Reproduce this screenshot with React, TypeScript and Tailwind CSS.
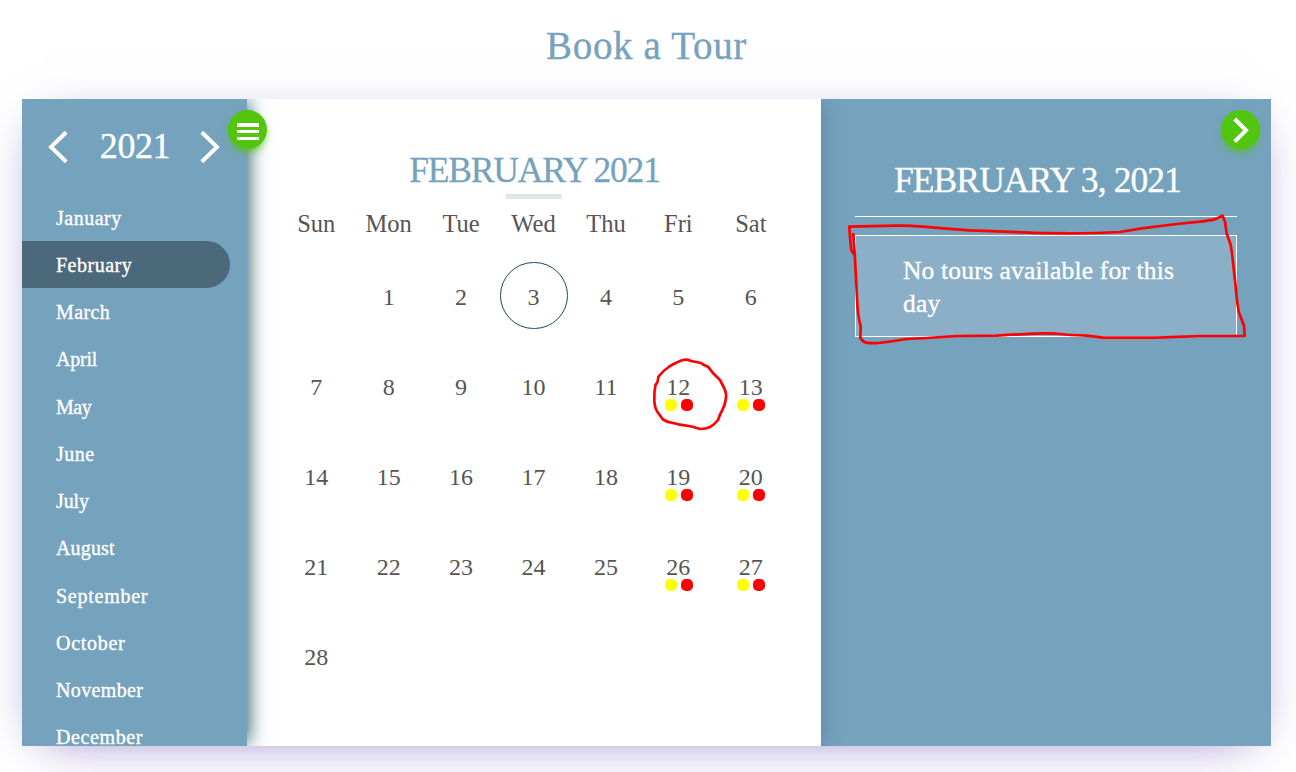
import React from "react";

const months = [
  { name: "January", ls: "tracking-[0.5px]" },
  { name: "February", ls: "tracking-[0.5px]" },
  { name: "March", ls: "tracking-[0.4px]" },
  { name: "April", ls: "tracking-[-0.2px]" },
  { name: "May", ls: "tracking-[-0.5px]" },
  { name: "June", ls: "tracking-[0.5px]" },
  { name: "July", ls: "tracking-[-0.1px]" },
  { name: "August", ls: "tracking-[0.15px]" },
  { name: "September", ls: "tracking-[0.75px]" },
  { name: "October", ls: "tracking-[0.7px]" },
  { name: "November", ls: "tracking-[0.35px]" },
  { name: "December", ls: "tracking-[0.6px]" },
];
const weekdays = ["Sun", "Mon", "Tue", "Wed", "Thu", "Fri", "Sat"];
const tourDays = [12, 13, 19, 20, 26, 27];
const selectedDay = 3;

function Chevron({ flip = false }: { flip?: boolean }) {
  return (
    <svg width="20" height="34" viewBox="0 0 20 34" className={flip ? "rotate-180" : ""} fill="none" stroke="white" strokeWidth="4">
      <path d="M18.2 2.2 3 17l15.2 14.8" />
    </svg>
  );
}

function Sidebar() {
  return (
    <aside className="relative z-20 h-[647px] w-[225px] shrink-0 bg-[#75a2bd] text-white shadow-[5px_0_18px_-3px_#2d6070]">
      <div className="h-full overflow-hidden">
        <div className="flex h-[95px] items-center justify-between pr-[27px] pb-[1px] pl-[26px]">
          <button className="mt-[2px]"><Chevron /></button>
          <span className="pl-[2px] text-[36px] leading-none tracking-[-0.4px] [-webkit-text-stroke:0.35px_white]">2021</span>
          <button className="mt-[2px]"><Chevron flip /></button>
        </div>
        <ul>
          {months.map((m) => (
            <li key={m.name} className="h-[47.25px]">
              <div
                className={
                  "flex h-[47px] w-[208px] items-center rounded-r-full pl-[34px] text-[20px] [-webkit-text-stroke:0.35px_white] " +
                  m.ls +
                  (m.name === "February" ? " bg-[#4c697b]" : "")
                }
              >
                {m.name}
              </div>
            </li>
          ))}
        </ul>
      </div>
      <button className="absolute top-[11px] -right-[20px] flex size-[39px] items-center justify-center rounded-full bg-[#52c50e] shadow-[0_5px_10px_-3px_#52c50e]">
        <svg width="22" height="18" viewBox="0 0 22 18" fill="white" className="mt-[4px]">
          <path d="M0 0h22v4H0zM0 7h22v3H0zM0 14h22v3H0z" />
        </svg>
      </button>
    </aside>
  );
}

function Day({ day }: { day: number }) {
  const hasTours = tourDays.includes(day);
  return (
    <div className="flex h-[90px] items-center justify-center">
      <div
        className={
          "ml-px flex h-[67px] w-[68px] flex-col items-center rounded-full pt-[22px] " +
          (day === selectedDay ? "border border-[#1c4a60]" : "border border-transparent")
        }
      >
        <span className="mr-px h-[24px] text-[24px] leading-[24px]">{day}</span>
        {hasTours && (
          <span className="flex gap-[4px]">
            <i className="h-[12px] w-[12px] rounded-[5px] bg-[#ffff00]" />
            <i className="h-[12px] w-[12px] rounded-[5px] bg-[#ff0000]" />
          </span>
        )}
      </div>
    </div>
  );
}

function Month() {
  return (
    <main className="relative z-10 h-full w-[574px] shrink-0 bg-white pr-[34px] pl-[33px] text-[#555] shadow-[5px_0_18px_-3px_rgba(40,75,95,0.3)]">
      <h2 className="pt-[52px] pl-[2px] text-center text-[35.5px] leading-[39px] tracking-[-1.2px] text-[#75a2bd] [-webkit-text-stroke:0.3px_#75a2bd]">
        FEBRUARY 2021
      </h2>
      <div className="mx-auto mt-[4px] h-[5px] w-[56px] bg-[#dde8eb]" />
      <div className="mt-[10px] grid grid-cols-7 text-center text-[24.5px] leading-[30px]">
        {weekdays.map((w) => (
          <span key={w}>{w}</span>
        ))}
      </div>
      <div className="mt-[11px] grid grid-cols-7">
        <div />
        {Array.from({ length: 28 }, (_, i) => (
          <Day key={i} day={i + 1} />
        ))}
      </div>
    </main>
  );
}

function Events() {
  return (
    <section className="relative h-full w-[450px] shrink-0 bg-[#75a2bd] px-[34px] pt-[57px] text-white">
      <h2 className="h-[61px] border-b border-white pt-[4px] pr-[17px] text-center text-[35.5px] leading-[40px] tracking-[-0.9px] whitespace-nowrap [-webkit-text-stroke:0.35px_white]">
        FEBRUARY 3, 2021
      </h2>
      <div className="mt-[18px] h-[102px] border border-white bg-[#8aafc7] pt-[18px] pr-[50px] pl-[47px] text-[25.5px] leading-[33px] tracking-[0.18px] [-webkit-text-stroke:0.35px_white]">
        No tours available for this day
      </div>
      <button className="absolute top-[11px] right-[11px] flex size-[39px] items-center justify-center rounded-full bg-[#52c50e] shadow-[0_5px_10px_-3px_#52c50e]">
        <svg width="16" height="26" viewBox="0 0 16 26" fill="none" stroke="white" strokeWidth="4">
          <path d="M1.7 2 13 13.3 1.7 24.6" />
        </svg>
      </button>
    </section>
  );
}

function Marks() {
  return (
    <svg
      width="1296"
      height="772"
      viewBox="0 0 1296 772"
      className="pointer-events-none absolute top-0 left-0 z-30"
      fill="none"
      stroke="#ff0000"
      strokeWidth="2.7"
      strokeLinejoin="round"
      strokeLinecap="round"
    >
      <path d="M691 361Q687 359 683 360T670 366Q664 370 658.5 376.5L657.5 382 655.5 385Q654 392 654.3 400T657.5 412 663 419.5Q667 422 670 422.3L680 424.7 691.7 426.5 700 429Q706 429 710 427T718 420Q720 414 722.3 410T725.7 400 725 390 720 380L712.7 372.7 708 366.7 703 364.5 701 363 695 361.800Z" />
      <path d="M853.3 234 854.7 253.3 857.3 303.3Q858 317 860.7 326.7L860.3 338Q862 341 865 342.3T878 343Q892 341.5 906.7 339L926.7 338 956.7 336 996.7 335.7Q1015 334.5 1033 333.7T1060 334 1086.7 335.7L1103.3 337.7H1156.7L1200 336H1244.7L1244 326 1238.7 311.7Q1236.5 300 1235.7 286.7L1232 253.3 1230.7 245 1226.7 233.3 1225 221.7 1222.5 215.7Q1217 219 1213.3 219.7T1200 221.7L1176.7 224 1140 228.7 1120 232Q1098 233.3 1070 233.3T1030 232.7L970 230.3 946.7 228.7 920 226.3Q908 225.3 896.7 225.7L849.3 226.7Q850 240 851.3 250 852.5 253 855 255" />
    </svg>
  );
}

export default function App() {
  return (
    <div className="relative h-[772px] w-[1296px] overflow-hidden bg-white pl-[22px] font-['Liberation_Serif',serif]">
      <h1 className="flex h-[99px] w-[1249px] items-center justify-center pt-px pb-[9px] text-[39px] leading-none tracking-[0.65px] text-[#75a2bd] [-webkit-text-stroke:0.35px_#75a2bd]">
        Book a Tour
      </h1>
      <div className="h-[647px] w-[1249px] shadow-[0_10px_50px_-20px_#8773c1]">
        <div className="relative flex h-full w-full overflow-hidden">
          <Sidebar />
          <Month />
          <Events />
        </div>
      </div>
      <Marks />
    </div>
  );
}
